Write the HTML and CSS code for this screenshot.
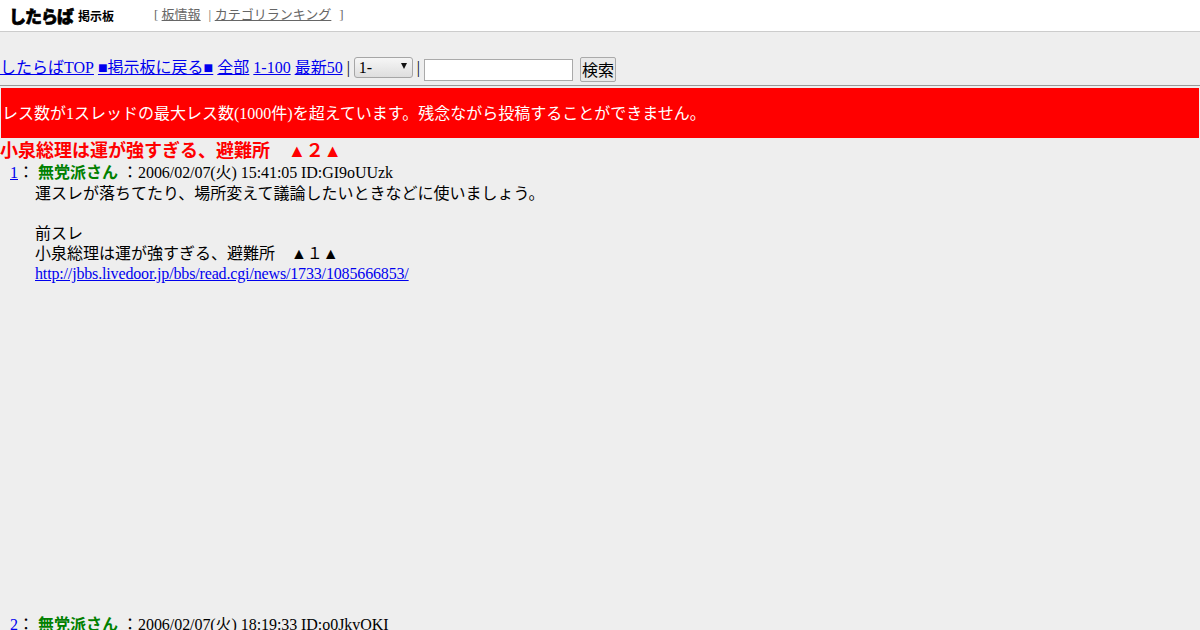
FILE: index.html
```html
<!DOCTYPE html>
<html lang="ja">
<head>
    <title>小泉総理は運が強すぎる、避難所 ▲2▲</title>
    <link rel="stylesheet" href="styles.css">
</head>
<body>
    <div class="site-header">
        <a class="logo" href="#"><span class="logo-main">したらば</span><span class="logo-sub">掲示板</span></a>
        <div class="header-links">[ <a href="#">板情報</a><span class="link-sep">|</span><a href="#">カテゴリランキング</a><span class="link-end">]</span></div>
    </div>

    <div class="nav">
        <a class="nav-item" href="#">したらばTOP</a>
        <a class="nav-item" href="#">■掲示板に戻る■</a>
        <a class="nav-item" href="#">全部</a>
        <a class="nav-item" href="#">1-100</a>
        <a class="nav-item" href="#">最新50</a>
        <span class="nav-item">|</span>
        <span class="select-box">1-<span class="select-arrow"></span></span>
        <span class="nav-item">|</span>
        <input class="search-input" type="text">
        <button class="search-button">検索</button>
    </div>
    <hr class="rule">

    <div class="notice">レス数が1スレッドの最大レス数(1000件)を超えています。残念ながら投稿することができません。</div>

    <h1 class="thread-title">小泉総理は運が強すぎる、避難所　▲２▲</h1>

    <dl class="posts">
        <dt class="post-head"><a href="#">1</a>： <b class="post-name">無党派さん</b> ：<span class="post-meta">2006/02/07(火) 15:41:05 ID:GI9oUUzk</span></dt>
        <dd class="post-body">
            運スレが落ちてたり、場所変えて議論したいときなどに使いましょう。<br>
            <br>
            前スレ<br>
            小泉総理は運が強すぎる、避難所　▲１▲<br>
            <a class="post-url" href="#">http://jbbs.livedoor.jp/bbs/read.cgi/news/1733/1085666853/</a>
        </dd>
        <dt class="post-head"><a href="#">2</a>： <b class="post-name">無党派さん</b> ：<span class="post-meta">2006/02/07(火) 18:19:33 ID:o0JkvOKI</span></dt>
    </dl>
</body>
</html>
```

FILE: styles.css
```css
html, body {
    height: 630px;
    overflow: hidden;
}

body {
    margin: 0;
    background-color: #eeeeee;
    color: #000;
    font-family: "Liberation Serif", "Noto Sans CJK JP", serif;
    font-size: 16px;
    line-height: 20px;
}

.site-header {
    display: flex;
    align-items: center;
    height: 31px;
    background-color: #fff;
    border-bottom: 1px solid #ccc;
}

.logo {
    display: flex;
    align-items: center;
    width: 154px;
    padding-left: 9px;
    box-sizing: border-box;
    color: #000;
    text-decoration: none;
    font-family: "Noto Sans CJK JP", sans-serif;
    font-weight: 900;
    white-space: nowrap;
}

.logo-main {
    font-size: 17px;
    letter-spacing: -1px;
    -webkit-text-stroke: 0.6px #000;
}

.logo-sub {
    margin-left: 5px;
    font-size: 12px;
    font-weight: 700;
}

.header-links {
    padding-bottom: 1px;
    font-size: 13px;
    color: #666;
}

.header-links a {
    color: #666;
}

.link-sep {
    margin: 0 3.5px 0 8px;
}

.link-end {
    margin-left: 8px;
}

.nav {
    display: flex;
    align-items: flex-start;
    gap: 4px;
    height: 25px;
    margin-top: 25px;
    white-space: nowrap;
}

.nav-item {
    margin-top: 1px;
}

.select-box {
    display: flex;
    align-items: center;
    justify-content: space-between;
    width: 59px;
    height: 21px;
    padding: 0 5px 0 4px;
    box-sizing: border-box;
    border: 1px solid #a6a6a6;
    border-radius: 3px;
    background: linear-gradient(#f6f6f6, #dedede);
}

.select-arrow {
    border-left: 3px solid transparent;
    border-right: 3px solid transparent;
    border-top: 6px solid #111;
    margin-bottom: 3px;
}

.search-input {
    width: 149px;
    height: 22px;
    margin-top: 2px;
    padding: 0;
    box-sizing: border-box;
    border: 1px solid #aaa;
    background-color: #fff;
}

.search-button {
    width: 36px;
    height: 25px;
    margin-left: 3px;
    padding: 0 0 2px;
    border: 1px solid #aaa;
    border-radius: 2px;
    background-color: #e9e9e9;
    color: #000;
    font-family: "Noto Sans CJK JP", sans-serif;
    font-size: 16px;
    line-height: 20px;
}

.rule {
    margin: 3px 0 1px;
    border: 0;
    border-top: 1px solid #999;
    border-bottom: 1px solid #eee;
}

.notice {
    display: flex;
    align-items: center;
    height: 50px;
    margin: 0 1px;
    padding: 2px 0 0 1px;
    box-sizing: border-box;
    background-color: #f00;
    color: #fff;
}

.thread-title {
    margin: 1px 0 0;
    color: #f00;
    font-size: 18px;
    line-height: 24px;
}

.posts {
    margin: 0;
}

.post-head {
    padding-left: 10px;
}

.post-name {
    color: #008000;
}

.post-meta {
    letter-spacing: -0.06px;
}

.post-body {
    height: 431px;
    margin: 1px 0 0 35px;
}

.post-url {
    letter-spacing: -0.155px;
}
```
